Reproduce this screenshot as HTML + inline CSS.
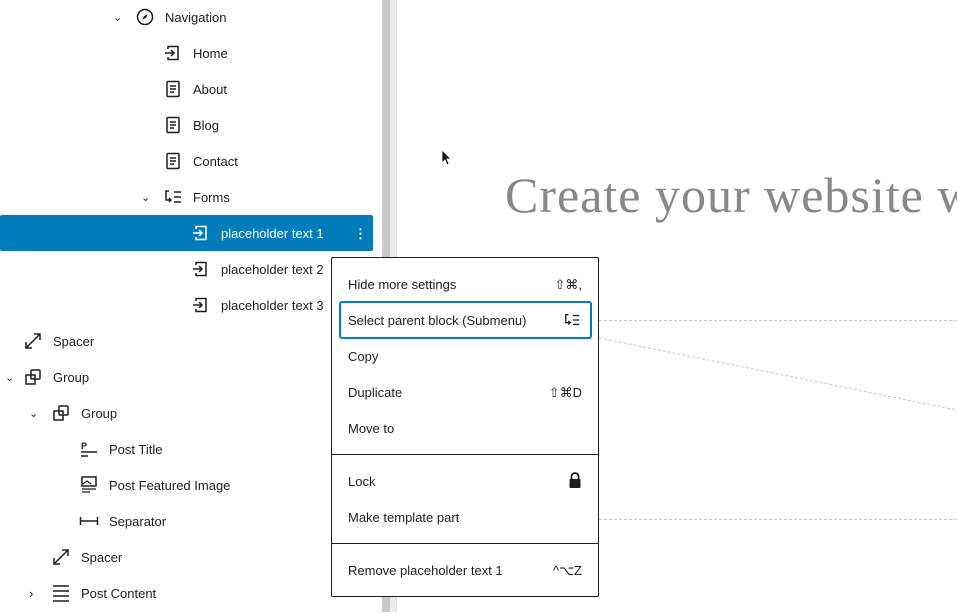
<!DOCTYPE html>
<html><head><style>
*{margin:0;padding:0;box-sizing:border-box}
body{width:957px;height:612px;overflow:hidden;background:#fff;font-family:"Liberation Sans",sans-serif;font-size:13px;color:#1e1e1e;position:relative}
.row{position:absolute;left:0;height:36px;line-height:38px;width:373px}
.row .t{position:absolute;top:0}
.row svg{position:absolute;top:8px}
.chev{position:absolute;top:0;font-size:11px}
.sel{background:#007cba;color:#fff;border-radius:2px}
.menu{position:absolute;left:331px;top:257px;width:268px;height:340px;border:1px solid #1e1e1e;background:#fff;border-radius:2px}
.mi{position:absolute;left:16px;right:16px;height:20px;line-height:22px}
.mi .k{position:absolute;right:0;top:0}
.sep{position:absolute;left:0;right:0;height:1px;background:#1e1e1e}
</style></head><body>
<div style="position:absolute;left:382px;top:0;width:8px;height:612px;background:#c9c9c9"></div>
<div style="position:absolute;left:390px;top:0;width:6px;height:612px;background:#ececec"></div>
<div style="position:absolute;left:396px;top:0;width:1px;height:612px;background:#ddd"></div>

<div class="row" style="top:-1px"><span class="chev" style="left:113px">⌄</span>
<svg style="left:135px" width="20" height="20" viewBox="0 0 20 20"><circle cx="10" cy="10" r="7.5" fill="none" stroke="#1e1e1e" stroke-width="1.5"/><path d="M12.5 7.5L9 9l-1.5 3.5L11 11z" fill="#1e1e1e"/></svg><span class="t" style="left:165px">Navigation</span></div>
<div class="row" style="top:35px"><svg style="left:163px" width="20" height="20" viewBox="0 0 20 20"><path d="M5 6V3.5h10v13H5V14" fill="none" stroke="#1e1e1e" stroke-width="1.5"/><path d="M2 10h9M8 7l3 3-3 3" fill="none" stroke="#1e1e1e" stroke-width="1.5"/></svg><span class="t" style="left:193px">Home</span></div>
<div class="row" style="top:71px"><svg style="left:163px" width="20" height="20" viewBox="0 0 20 20"><rect x="4" y="2.5" width="12" height="15" rx="1" fill="none" stroke="#1e1e1e" stroke-width="1.5"/><path d="M7 7h6M7 10h6M7 13h4" stroke="#1e1e1e" stroke-width="1.5"/></svg><span class="t" style="left:193px">About</span></div>
<div class="row" style="top:107px"><svg style="left:163px" width="20" height="20" viewBox="0 0 20 20"><rect x="4" y="2.5" width="12" height="15" rx="1" fill="none" stroke="#1e1e1e" stroke-width="1.5"/><path d="M7 7h6M7 10h6M7 13h4" stroke="#1e1e1e" stroke-width="1.5"/></svg><span class="t" style="left:193px">Blog</span></div>
<div class="row" style="top:143px"><svg style="left:163px" width="20" height="20" viewBox="0 0 20 20"><rect x="4" y="2.5" width="12" height="15" rx="1" fill="none" stroke="#1e1e1e" stroke-width="1.5"/><path d="M7 7h6M7 10h6M7 13h4" stroke="#1e1e1e" stroke-width="1.5"/></svg><span class="t" style="left:193px">Contact</span></div>
<div class="row" style="top:179px"><span class="chev" style="left:141px">⌄</span>
<svg style="left:162px" width="22" height="20" viewBox="0 0 22 20"><path d="M7 4H4v9h5M7 11l2 2-2 2" fill="none" stroke="#1e1e1e" stroke-width="1.5"/><path d="M12 5h7M12 10h7M12 15h7" stroke="#1e1e1e" stroke-width="1.5"/></svg><span class="t" style="left:193px">Forms</span></div>
<div class="row sel" style="top:215px"><svg style="left:191px" width="20" height="20" viewBox="0 0 20 20"><path d="M5 6V3.5h10v13H5V14" fill="none" stroke="#fff" stroke-width="1.5"/><path d="M2 10h9M8 7l3 3-3 3" fill="none" stroke="#fff" stroke-width="1.5"/></svg><span class="t" style="left:221px">placeholder text 1</span><span class="t" style="left:354px;font-weight:bold">⋮</span></div>
<div class="row" style="top:251px"><svg style="left:191px" width="20" height="20" viewBox="0 0 20 20"><path d="M5 6V3.5h10v13H5V14" fill="none" stroke="#1e1e1e" stroke-width="1.5"/><path d="M2 10h9M8 7l3 3-3 3" fill="none" stroke="#1e1e1e" stroke-width="1.5"/></svg><span class="t" style="left:221px">placeholder text 2</span></div>
<div class="row" style="top:287px"><svg style="left:191px" width="20" height="20" viewBox="0 0 20 20"><path d="M5 6V3.5h10v13H5V14" fill="none" stroke="#1e1e1e" stroke-width="1.5"/><path d="M2 10h9M8 7l3 3-3 3" fill="none" stroke="#1e1e1e" stroke-width="1.5"/></svg><span class="t" style="left:221px">placeholder text 3</span></div>
<div class="row" style="top:323px"><svg style="left:23px" width="20" height="20" viewBox="0 0 20 20"><path d="M3 17L17 3M3 11v6h6M11 3h6v6" fill="none" stroke="#1e1e1e" stroke-width="1.5"/></svg><span class="t" style="left:53px">Spacer</span></div>
<div class="row" style="top:359px"><span class="chev" style="left:5px">⌄</span><svg style="left:23px" width="20" height="20" viewBox="0 0 20 20"><rect x="3" y="8" width="9" height="9" fill="none" stroke="#1e1e1e" stroke-width="1.5"/><rect x="8" y="3" width="9" height="9" rx="1" fill="none" stroke="#1e1e1e" stroke-width="1.5"/></svg><span class="t" style="left:53px">Group</span></div>
<div class="row" style="top:395px"><span class="chev" style="left:29px">⌄</span><svg style="left:51px" width="20" height="20" viewBox="0 0 20 20"><rect x="3" y="8" width="9" height="9" fill="none" stroke="#1e1e1e" stroke-width="1.5"/><rect x="8" y="3" width="9" height="9" rx="1" fill="none" stroke="#1e1e1e" stroke-width="1.5"/></svg><span class="t" style="left:81px">Group</span></div>
<div class="row" style="top:431px"><svg style="left:79px" width="20" height="20" viewBox="0 0 20 20"><text x="2" y="10" font-size="9" font-family="Liberation Sans" font-weight="bold" fill="#1e1e1e">P</text><path d="M2 13h16M2 17h7" stroke="#1e1e1e" stroke-width="1.5"/></svg><span class="t" style="left:109px">Post Title</span></div>
<div class="row" style="top:467px"><svg style="left:79px" width="20" height="20" viewBox="0 0 20 20"><rect x="3" y="2" width="14" height="9" fill="none" stroke="#1e1e1e" stroke-width="1.5"/><path d="M4 9l4-3 4 3M3 14h14M3 17h8" fill="none" stroke="#1e1e1e" stroke-width="1.3"/></svg><span class="t" style="left:109px">Post Featured Image</span></div>
<div class="row" style="top:503px"><svg style="left:79px" width="20" height="20" viewBox="0 0 20 20"><path d="M1 10h18M1.5 6v8M18.5 6v8" stroke="#1e1e1e" stroke-width="1.5"/></svg><span class="t" style="left:109px">Separator</span></div>
<div class="row" style="top:539px"><svg style="left:51px" width="20" height="20" viewBox="0 0 20 20"><path d="M3 17L17 3M3 11v6h6M11 3h6v6" fill="none" stroke="#1e1e1e" stroke-width="1.5"/></svg><span class="t" style="left:81px">Spacer</span></div>
<div class="row" style="top:575px"><span class="chev" style="left:29px;font-size:13px">›</span><svg style="left:51px" width="20" height="20" viewBox="0 0 20 20"><path d="M2 3h16M2 8h16M2 13h16M2 18h16" stroke="#1e1e1e" stroke-width="1.5"/></svg><span class="t" style="left:81px">Post Content</span></div>

<svg style="position:absolute;left:0;top:0" width="957" height="612">
<line x1="599" y1="320.5" x2="957" y2="320.5" stroke="#ccc" stroke-dasharray="3 2"/>
<line x1="599" y1="519.5" x2="957" y2="519.5" stroke="#ccc" stroke-dasharray="3 2"/>
<line x1="599" y1="338" x2="957" y2="410" stroke="#ccc" stroke-dasharray="3 2"/>
<path d="M442 150v13l3-3 2 5 2-1-2-5h4z" fill="#111" stroke="#fff" stroke-width=".8"/>
</svg>
<div style="position:absolute;left:505px;top:166px;font-family:'Liberation Serif',serif;font-size:50px;color:#888;white-space:nowrap;letter-spacing:1px">Create your website w</div>

<div class="menu">
<div class="mi" style="top:16px">Hide more settings<span class="k">⇧⌘,</span></div>
<div style="position:absolute;left:7px;top:43px;width:253px;height:38px;border:2px solid #007cba;border-radius:3px"></div>
<div class="mi" style="top:52px">Select parent block (Submenu)<span class="k"><svg width="20" height="16" viewBox="0 0 22 18" style="margin-top:2px"><path d="M7 3H4v9h5M7 10l2 2-2 2" fill="none" stroke="#1e1e1e" stroke-width="1.5"/><path d="M12 4h7M12 9h7M12 14h7" stroke="#1e1e1e" stroke-width="1.5"/></svg></span></div>
<div class="mi" style="top:88px">Copy</div>
<div class="mi" style="top:124px">Duplicate<span class="k">⇧⌘D</span></div>
<div class="mi" style="top:160px">Move to</div>
<div class="sep" style="top:196px"></div>
<div class="mi" style="top:213px">Lock<span class="k"><svg width="14" height="18" viewBox="0 0 14 18"><path d="M3.5 8V5.5a3.5 3.5 0 0 1 7 0V8" fill="none" stroke="#1e1e1e" stroke-width="1.8"/><rect x="1.5" y="8" width="11" height="9" rx="1" fill="#1e1e1e"/></svg></span></div>
<div class="mi" style="top:249px">Make template part</div>
<div class="sep" style="top:285px"></div>
<div class="mi" style="top:302px">Remove placeholder text 1<span class="k">^⌥Z</span></div>
</div>
</body></html>
